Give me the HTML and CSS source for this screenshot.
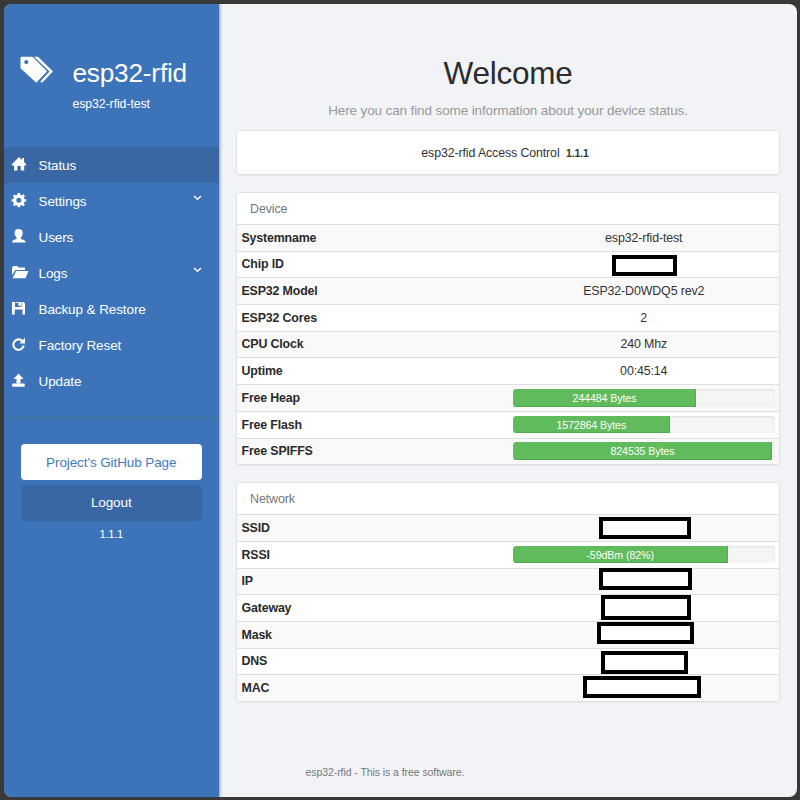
FILE: index.html
```html
<!DOCTYPE html>
<html lang="en">
<head>
<meta charset="utf-8">
<title>esp32-rfid</title>
<link rel="stylesheet" href="styles.css">
</head>
<body>
<div class="window">
  <nav class="sidebar">
    <header class="brand">
      <svg class="logo" viewBox="0 0 34 28"><path fill="#fff" fill-rule="evenodd" d="M.500 1.500Q.500 .800 1.300 .800H12.500L27 15.300L16.300 26.800L.500 12.300ZM6.300 4A2.100 2.100 0 1 0 6.300 8.200A2.100 2.100 0 1 0 6.300 4Z"/><path fill="#fff" d="M14 .800H18L33 15.500L22 26.800L20.300 25.400L29.500 15.500Z"/></svg>
      <div>
        <h2>esp32-rfid</h2>
        <p>esp32-rfid-test</p>
      </div>
    </header>
    <ul class="menu">
      <li class="active"><svg viewBox="0 0 16 16"><path d="M8 1L11 4V2H13V6L15.500 8.500L14.800 9.500H13.200V14.500H9.700V10H6.500V14.500H3V9.500H1.200L.500 8.500Z"/></svg><span>Status</span></li>
      <li><svg viewBox="0 0 16 16"><path fill-rule="evenodd" d="M6.500 1H9L9.400 3L10.700 3.500L12.300 2.300L14 4L12.800 5.700L13.400 7L15.200 7.300V9.600L13.300 9.900L12.800 11.100L13.900 12.700L12.300 14.200L10.600 13.100L9.400 13.600L9 15.200H6.700L6.300 13.600L5 13.100L3.400 14.200L1.900 12.600L2.900 11L2.400 9.800L.700 9.500V7.200L2.500 6.900L3 5.600L1.900 4L3.600 2.400L5 3.500L6.200 3ZM7.800 5.800A2.500 2.500 0 1 0 7.800 10.800A2.500 2.500 0 1 0 7.800 5.800Z"/></svg><span>Settings</span><svg class="chevron" viewBox="0 0 9 6"><path d="M1 1L4.500 4.300L8 1"/></svg></li>
      <li><svg viewBox="0 0 16 16"><path d="M7.500 1C10.500 1 11.800 2.500 11.700 5C11.600 7.100 11 8.300 10 9.400V10.900L13 12Q14.500 12.600 14.500 14.500H1Q1 12.600 2.500 12L5.500 10.900V9.400C4.400 8.300 3.700 7.100 3.600 5C3.600 2.500 4.800 1 7.500 1Z"/></svg><span>Users</span></li>
      <li><svg class="wide" viewBox="0 0 18 16"><path d="M1 11V4L2.500 2H6.500L7.500 3.500H14V6H4.500Z"/><path d="M5.200 7H17.500L14.500 14.300H1.500Z"/></svg><span>Logs</span><svg class="chevron" viewBox="0 0 9 6"><path d="M1 1L4.500 4.300L8 1"/></svg></li>
      <li><svg viewBox="0 0 16 16"><path fill-rule="evenodd" d="M1 2H4V7H10.500V2H12.500L14 3.500V14.500H11.500V9.500H3.700V14.500H1ZM7.500 2H10V6H7.500Z"/><path d="M4.500 2H7V3H4.500Z"/></svg><span>Backup &amp; Restore</span></li>
      <li><svg viewBox="0 0 16 16"><path d="M11.500 5.200A5.200 5.200 0 1 0 12.700 9.500" fill="none" stroke="#fff" stroke-width="2.100"/><path d="M14 1.500V7.500H8.500Z"/></svg><span>Factory Reset</span></li>
      <li><svg viewBox="0 0 16 16"><path d="M7.500 1.500L12.500 7H9.500V11.200H5.500V7H2.500ZM1.200 11.500H13.700V14.800H1.200Z"/></svg><span>Update</span></li>
    </ul>
    <div class="actions">
      <a class="button light">Project's GitHub Page</a>
      <a class="button dark">Logout</a>
      <p>1.1.1</p>
    </div>
  </nav>
  <main class="content">
    <h1>Welcome</h1>
    <p class="lead">Here you can find some information about your device status.</p>
    <section class="panel version"><span>esp32-rfid Access Control</span><b>1.1.1</b></section>
    <section class="panel">
      <h3>Device</h3>
      <dl>
        <div><dt>Systemname</dt><dd>esp32-rfid-test</dd></div>
        <div><dt>Chip ID</dt><dd><i class="mask chip"></i></dd></div>
        <div><dt>ESP32 Model</dt><dd>ESP32-D0WDQ5 rev2</dd></div>
        <div><dt>ESP32 Cores</dt><dd>2</dd></div>
        <div><dt>CPU Clock</dt><dd>240 Mhz</dd></div>
        <div><dt>Uptime</dt><dd>00:45:14</dd></div>
        <div><dt>Free Heap</dt><dd><div class="track"><div class="bar" style="width:70%">244484 Bytes</div></div></dd></div>
        <div><dt>Free Flash</dt><dd><div class="track"><div class="bar" style="width:60%">1572864 Bytes</div></div></dd></div>
        <div><dt>Free SPIFFS</dt><dd><div class="track"><div class="bar" style="width:99%">824535 Bytes</div></div></dd></div>
      </dl>
    </section>
    <section class="panel">
      <h3>Network</h3>
      <dl>
        <div><dt>SSID</dt><dd><i class="mask ssid"></i></dd></div>
        <div><dt>RSSI</dt><dd><div class="track"><div class="bar" style="width:82%">-59dBm (82%)</div></div></dd></div>
        <div><dt>IP</dt><dd><i class="mask ip"></i></dd></div>
        <div><dt>Gateway</dt><dd><i class="mask gateway"></i></dd></div>
        <div><dt>Mask</dt><dd><i class="mask netmask"></i></dd></div>
        <div><dt>DNS</dt><dd><i class="mask dns"></i></dd></div>
        <div><dt>MAC</dt><dd><i class="mask mac"></i></dd></div>
      </dl>
    </section>
    <footer>esp32-rfid - This is a free software.</footer>
  </main>
</div>
</body>
</html>
```

FILE: styles.css
```css
* { box-sizing: border-box; }
body {
  margin: 0;
  padding: 4px 3px 3px 4px;
  height: 800px;
  background: #393939;
  color: #333;
  font: 12.4px/18px "Liberation Sans", Arial, sans-serif;
  overflow: hidden;
}
h1, h2, h3, p, ul, dl, dd { margin: 0; padding: 0; font-weight: 400; }
.window {
  display: flex;
  height: 793px;
  border-radius: 8px;
  overflow: hidden;
  background: #f1f3f7;
}
.sidebar {
  width: 215px;
  flex: none;
  background: #3d74b9;
  color: #fff;
  box-shadow: 1px 0 3px rgba(0, 0, 0, .4);
}
.brand { display: flex; height: 143px; padding: 50px 0 0 15.5px; }
.logo { width: 34px; height: 28px; margin-top: 2px; margin-right: 19px; }
.brand h2 { font-size: 26.2px; line-height: 38px; letter-spacing: -.2px; }
.brand p { font-size: 12.3px; line-height: 16px; margin-top: 4px; letter-spacing: -.08px; }
.menu { list-style: none; height: 271px; border-bottom: 1px solid #4a7390; }
.menu li {
  display: flex;
  align-items: center;
  height: 36.1px;
  padding: 0 17px 0 7px;
  font-size: 13.5px;
  letter-spacing: -.1px;
}
.menu .active { background: #3867a4; }
.menu svg { width: 16px; height: 16px; margin-right: 11.5px; margin-top: -3px; fill: #fff; }
.menu svg.wide { width: 18px; margin-right: 9.5px; }
.menu span { flex: 1; padding-top: 1.4px; }
.menu svg.chevron { width: 9px; height: 6px; margin: -6px 0 0; fill: none; stroke: #fff; stroke-width: 1.5px; }
.actions { padding: 26px 17px 0 16.5px; text-align: center; }
.button {
  display: block;
  height: 36.4px;
  line-height: 37px;
  margin-bottom: 4.2px;
  border-radius: 4px;
  font-size: 13.5px;
  letter-spacing: -.1px;
}
.light { background: #fff; color: #427abf; }
.dark { background: #3867a4; line-height: 36px; }
.actions p { font-size: 11.2px; margin-top: 4px; letter-spacing: -.3px; }
.content { flex: 1; padding: 50px 17px 0; text-align: center; }
h1 { font-size: 31.5px; line-height: 38px; color: #2c2c2c; letter-spacing: -.25px; }
.lead { font-size: 13.5px; line-height: 18px; margin: 10px 0; color: #999; letter-spacing: -.12px; }
.panel {
  margin-bottom: 17px;
  border: 1px solid #dfe0e1;
  border-radius: 3.5px;
  background: #fff;
  box-shadow: 0 1px 1px rgba(0, 0, 0, .05);
}
.version { height: 45px; padding-top: 13px; letter-spacing: -.12px; }
.version span { margin-left: -6px; }
.version b { margin-left: 6.5px; font-size: 10.5px; letter-spacing: -.15px; }
h3 { height: 31px; padding: 7px 13px; font-size: 12.5px; color: #777; text-align: left; letter-spacing: -.15px; }
dl > div {
  display: grid;
  grid-template-columns: 271.5px 1fr;
  height: 26.7px;
  border-top: 1px solid #dfdfdf;
}
dl > div:nth-child(odd) { background: #f9f9f9; }
dt { padding: 3.7px 4.5px; font-weight: 700; text-align: left; color: #2a2a2a; letter-spacing: -.16px; }
dd { position: relative; padding: 3.7px 4px; letter-spacing: -.12px; }
.track {
  height: 17.7px;
  overflow: hidden;
  border-radius: 3.5px;
  background: #f5f5f5;
  box-shadow: inset 0 1px 2px rgba(0, 0, 0, .1);
}
.bar {
  height: 100%;
  background: #5fbb5c;
  color: #fff;
  font-size: 10.7px;
  line-height: 18px;
  box-shadow: inset -1px -1px 0 #50aa50;
}
/* Blanked-out values drawn over their table cells */
.mask { position: absolute; border: 4px solid #000; background: #fff; }
.chip { left: 103px; top: 3px; width: 65px; height: 21px; }
.ssid { left: 90px; top: 2px; width: 92px; height: 22px; }
.ip { left: 90px; top: -1px; width: 93px; height: 22px; }
.gateway { left: 92px; top: 0; width: 90px; height: 25px; }
.netmask { left: 88.500px; top: 0; width: 97px; height: 22px; }
.dns { left: 92px; top: 2px; width: 87px; height: 23px; }
.mac { left: 74.500px; top: 1px; width: 118px; height: 22px; }
footer { margin: 61px 0 0 69.5px; font-size: 10.5px; text-align: left; color: #777; letter-spacing: -.07px; }
```
